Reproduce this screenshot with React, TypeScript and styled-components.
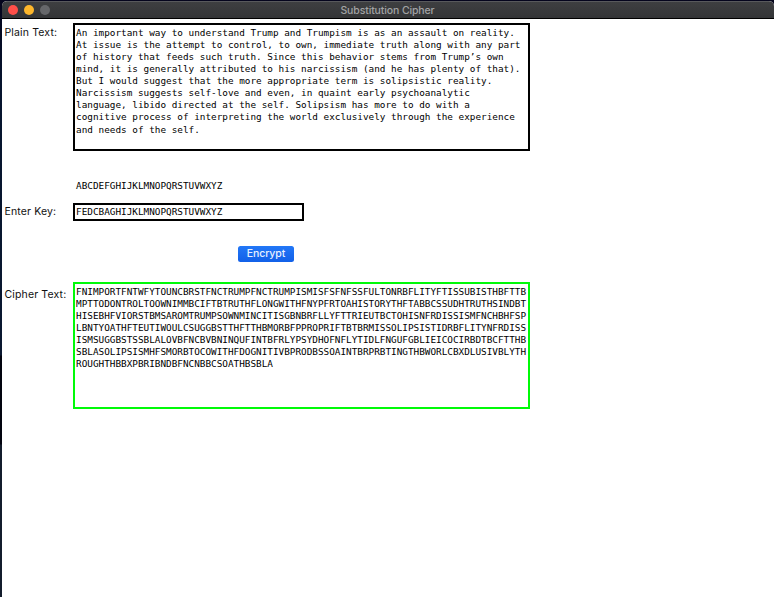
import React from 'react';
import styled, { createGlobalStyle } from 'styled-components';

const Global = createGlobalStyle`
  *, *::before, *::after { box-sizing: border-box; }
  body { margin: 0; overflow: hidden; background: #0b1428; }
`;

const Desktop = styled.div`
  height: 597px;
  padding: 1px 0 0 2px;
  background: linear-gradient(#04041c 0, #06142e 84px, #0a1830 355px, #02040f 356px, #02040f 444px, #131c2c 445px, #131c2c 100%);
`;

const Window = styled.main`
  height: 596px;
  display: flex;
  flex-direction: column;
  background: #fff;
  border-radius: 5px 5px 0 0;
  overflow: hidden;
  font-family: Inter, 'Liberation Sans', sans-serif;
`;

const TitleBar = styled.header`
  flex: none;
  height: 18px;
  display: grid;
  grid-template-columns: 1fr auto 1fr;
  align-items: center;
  padding: 0 7px 0 6px;
  background: linear-gradient(#3e3f41, #343537);
  border-top: 1px solid #58595c;
  border-bottom: 1px solid #000;
`;

const Lights = styled.div`
  display: flex;
  gap: 6px;
`;

const Light = styled.span<{ $color: string }>`
  width: 10px;
  height: 10px;
  border-radius: 50%;
  background: ${(p) => p.$color};
`;

const Title = styled.h1`
  margin: 2px 0 0;
  font-size: 10.5px;
  line-height: 14px;
  font-weight: 500;
  letter-spacing: -0.12px;
  color: #a2a3a5;
`;

const Form = styled.div`
  display: grid;
  grid-template-columns: 68.5px 457px;
  grid-template-rows: 128px 52px 18px 61px 127px;
  padding: 4px 0 0 2.5px;
`;

const Label = styled.label<{ $top: number }>`
  padding-top: ${(p) => p.$top}px;
  font-size: 10.5px;
  line-height: 14px;
  letter-spacing: 0.14px;
  white-space: nowrap;
  color: #111;
`;

const Mono = styled.div`
  font-family: 'DejaVu Sans Mono', monospace;
  font-size: 9.35px;
  line-height: 12.07px;
  white-space: pre;
  color: #000;
`;

const TextBox = styled(Mono)<{ $color: string }>`
  padding: 2px 0 0 1px;
  border: 2px solid ${(p) => p.$color};
`;

const Alphabet = styled(Mono)`
  grid-column: 2;
  padding: 29px 0 0 3px;
`;

const KeyField = styled(Mono)`
  width: 231px;
  padding: 1px 0 0 1px;
  border: 2px solid #000;
`;

const Actions = styled.div`
  grid-column: 2;
  padding: 25px 0 0 165px;
`;

const EncryptButton = styled.button`
  display: block;
  width: 56px;
  height: 16px;
  padding: 0;
  border: 0;
  border-radius: 2.5px;
  background: linear-gradient(#2277f7, #1260e8);
  color: #e9f1ff;
  font: 500 10.5px/16px Inter, sans-serif;
  letter-spacing: -0.1px;
`;

const plainText = [
  'An important way to understand Trump and Trumpism is as an assault on reality.',
  'At issue is the attempt to control, to own, immediate truth along with any part',
  'of history that feeds such truth. Since this behavior stems from Trump’s own',
  'mind, it is generally attributed to his narcissism (and he has plenty of that).',
  'But I would suggest that the more appropriate term is solipsistic reality.',
  'Narcissism suggests self-love and even, in quaint early psychoanalytic',
  'language, libido directed at the self. Solipsism has more to do with a',
  'cognitive process of interpreting the world exclusively through the experience',
  'and needs of the self.',
].join('\n');

const cipherText = [
  'FNIMPORTFNTWFYTOUNCBRSTFNCTRUMPFNCTRUMPISMISFSFNFSSFULTONRBFLITYFTISSUBISTHBFTTB',
  'MPTTODONTROLTOOWNIMMBCIFTBTRUTHFLONGWITHFNYPFRTOAHISTORYTHFTABBCSSUDHTRUTHSINDBT',
  'HISEBHFVIORSTBMSAROMTRUMPSOWNMINCITISGBNBRFLLYFTTRIEUTBCTOHISNFRDISSISMFNCHBHFSP',
  'LBNTYOATHFTEUTIWOULCSUGGBSTTHFTTHBMORBFPPROPRIFTBTBRMISSOLIPSISTIDRBFLITYNFRDISS',
  'ISMSUGGBSTSSBLALOVBFNCBVBNINQUFINTBFRLYPSYDHOFNFLYTIDLFNGUFGBLIEICOCIRBDTBCFTTHB',
  'SBLASOLIPSISMHFSMORBTOCOWITHFDOGNITIVBPRODBSSOAINTBRPRBTINGTHBWORLCBXDLUSIVBLYTH',
  'ROUGHTHBBXPBRIBNDBFNCNBBCSOATHBSBLA',
].join('\n');

export default function App() {
  return (
    <Desktop>
      <Global />
      <Window>
        <TitleBar>
          <Lights>
            <Light $color="#ff4f49" />
            <Light $color="#fdb62b" />
            <Light $color="#66676a" />
          </Lights>
          <Title>Substitution Cipher</Title>
        </TitleBar>
        <Form>
          <Label $top={3}>Plain Text:</Label>
          <TextBox $color="#000">{plainText}</TextBox>
          <Alphabet>ABCDEFGHIJKLMNOPQRSTUVWXYZ</Alphabet>
          <Label $top={2}>Enter Key:</Label>
          <KeyField>FEDCBAGHIJKLMNOPQRSTUVWXYZ</KeyField>
          <Actions>
            <EncryptButton type="button">Encrypt</EncryptButton>
          </Actions>
          <Label $top={6}>Cipher Text:</Label>
          <TextBox $color="#00fa08">{cipherText}</TextBox>
        </Form>
      </Window>
    </Desktop>
  );
}
